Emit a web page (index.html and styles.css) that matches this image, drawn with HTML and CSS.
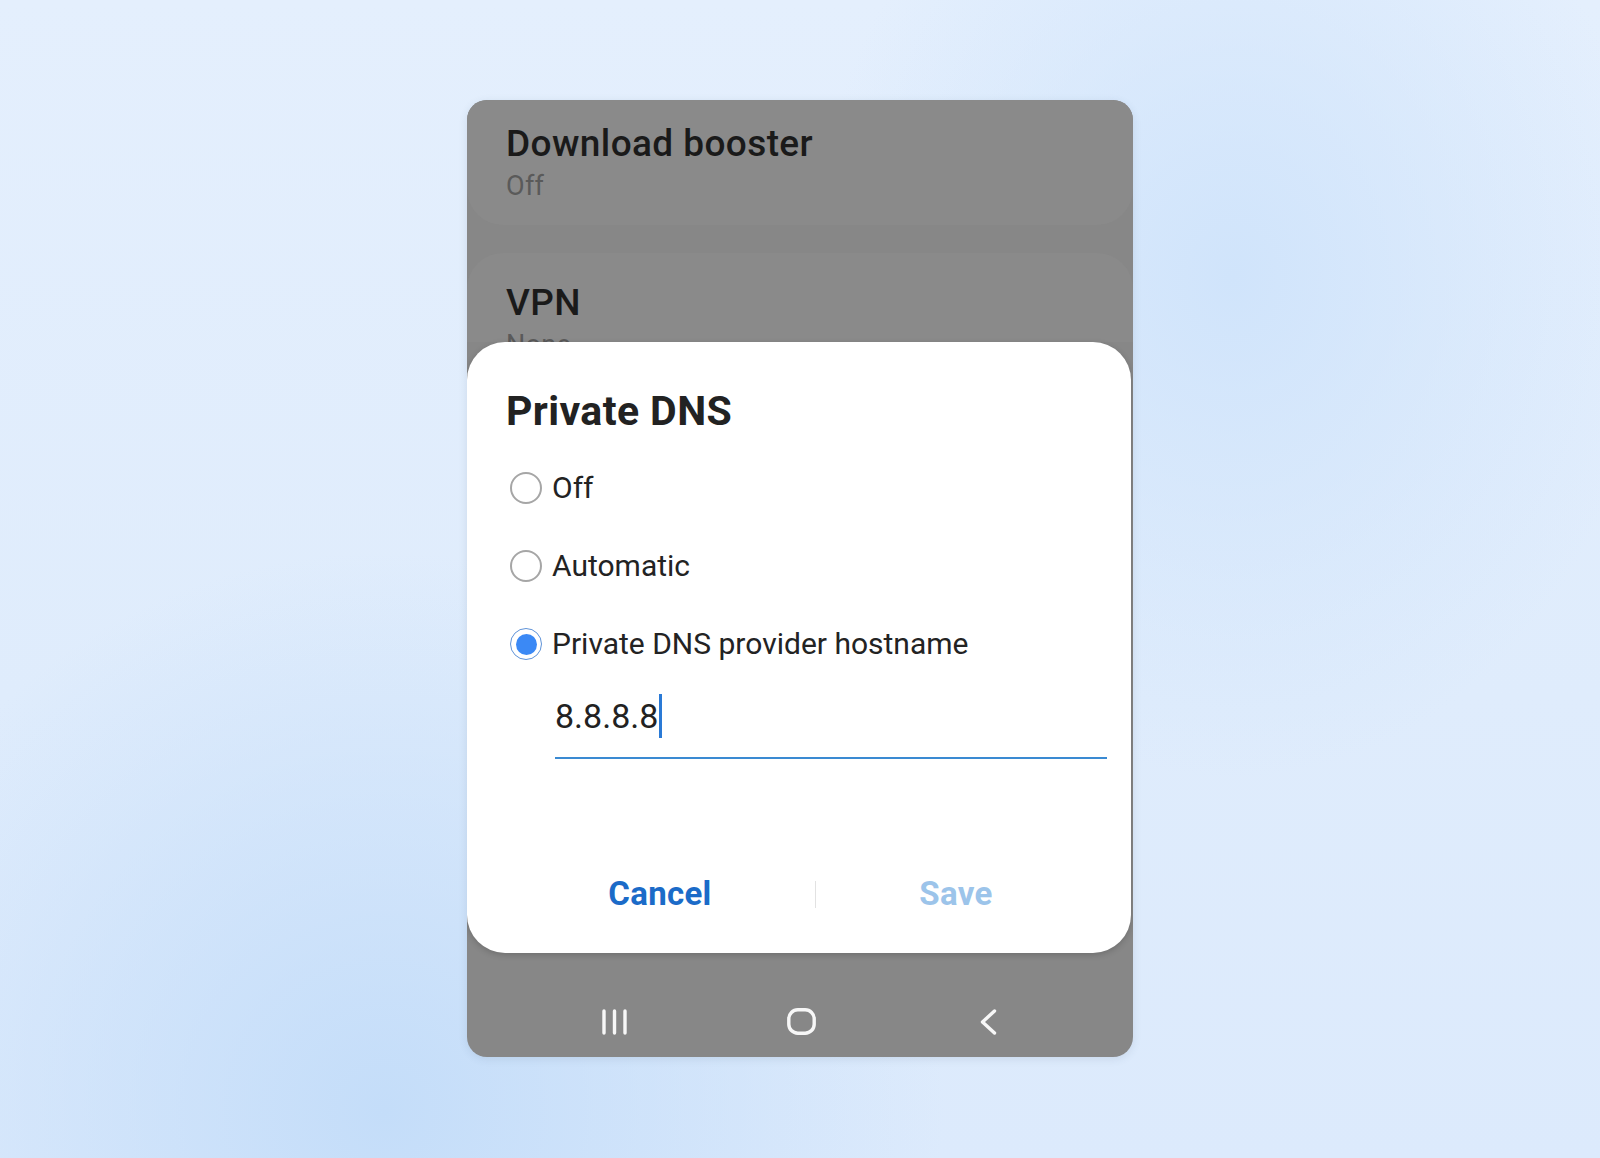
FILE: index.html
```html
<!DOCTYPE html>
<html lang="en">
<head>
<meta charset="utf-8">
<title>Private DNS</title>
<link rel="stylesheet" href="styles.css">
</head>
<body>
<div class="stage">
  <div class="phone">
    <div class="settings">
      <div class="card card-first">
        <div class="card-title">Download booster</div>
        <div class="card-sub">Off</div>
      </div>
      <div class="card card-second">
        <div class="card-title">VPN</div>
        <div class="card-sub">None</div>
      </div>
    </div>
    <div class="dialog">
      <div class="dialog-title">Private DNS</div>
      <div class="options">
        <div class="option"><span class="radio"></span><span class="opt-label">Off</span></div>
        <div class="option"><span class="radio"></span><span class="opt-label">Automatic</span></div>
        <div class="option"><span class="radio radio-on"><span class="radio-dot"></span></span><span class="opt-label">Private DNS provider hostname</span></div>
      </div>
      <div class="field"><span class="field-text">8.8.8.8</span><span class="caret"></span></div>
      <div class="actions">
        <div class="btn btn-cancel">Cancel</div>
        <div class="sep"></div>
        <div class="btn btn-save">Save</div>
      </div>
    </div>
    <div class="nav">
      <svg class="nav-icon" width="26" height="26" viewBox="0 0 26 26"><path d="M2 2V24M12.5 2V24M23 2V24" fill="none" stroke="#f7f7f7" stroke-width="3.4" stroke-linecap="round"/></svg>
      <svg class="nav-icon" width="29" height="27" viewBox="0 0 29 27"><rect x="1.8" y="1.8" width="25.4" height="23.4" rx="9" fill="none" stroke="#f7f7f7" stroke-width="3.4"/></svg>
      <svg class="nav-icon" width="17" height="26" viewBox="0 0 17 26"><path d="M14.5 2 L2.5 13 L14.5 24" fill="none" stroke="#f7f7f7" stroke-width="3.4" stroke-linecap="round" stroke-linejoin="round"/></svg>
    </div>
  </div>
</div>
</body>
</html>
```

FILE: styles.css
```css
html, body {
  margin: 0;
  padding: 0;
}

body {
  width: 1600px;
  height: 1158px;
  overflow: hidden;
  font-family: Roboto, "Liberation Sans", sans-serif;
  background:
    radial-gradient(ellipse 560px 560px at 24% 96%, rgba(196, 221, 249, 1) 0%, rgba(196, 221, 249, 0) 100%),
    radial-gradient(ellipse 420px 500px at 77% 24%, rgba(208, 228, 251, 1) 0%, rgba(208, 228, 251, 0) 100%),
    linear-gradient(180deg, #e4effd 0%, #dfecfc 60%, #dceafc 100%);
}

.stage {
  padding-top: 100px;
}

.phone {
  width: 666px;
  height: 957px;
  margin: 0 auto;
  border-radius: 20px;
  overflow: hidden;
  background: #878787;
  display: flex;
  flex-direction: column;
  box-shadow: 0 2px 8px rgba(60, 80, 110, 0.12);
}

.settings {
  flex: none;
  height: 242px;
  overflow: hidden;
}

.card {
  background: #8a8a8a;
  box-sizing: border-box;
  padding-left: 39px;
}

.card-first {
  height: 125px;
  padding-top: 23px;
  border-radius: 0 0 36px 36px;
}

.card-second {
  margin-top: 28px;
  height: 220px;
  padding-top: 29px;
  border-radius: 36px 36px 0 0;
}

.card-title {
  font-weight: 500;
  font-size: 37px;
  line-height: 42px;
  letter-spacing: 0.4px;
  color: #1a1a1a;
}

.card-sub {
  margin-top: 6px;
  font-size: 27px;
  line-height: 30px;
  letter-spacing: 0.3px;
  color: #5a5a5a;
}

.dialog {
  flex: none;
  height: 611px;
  margin-right: 2px;
  box-sizing: border-box;
  padding-top: 45px;
  background: #ffffff;
  border-radius: 38px;
  box-shadow: 0 2px 6px rgba(0, 0, 0, 0.18);
  position: relative;
  z-index: 1;
}

.dialog-title {
  padding-left: 39px;
  font-weight: 700;
  font-size: 41px;
  line-height: 48px;
  letter-spacing: 0.4px;
  color: #222222;
}

.options {
  margin-top: 14px;
}

.option {
  height: 78px;
  display: flex;
  align-items: center;
  padding-left: 43px;
  gap: 10px;
}

.radio {
  width: 32px;
  height: 32px;
  box-sizing: border-box;
  border: 2px solid #a6a6a6;
  border-radius: 50%;
  display: flex;
  align-items: center;
  justify-content: center;
  flex: none;
}

.radio-on {
  border: 1.6px solid #5f93d8;
}

.radio-dot {
  width: 21px;
  height: 21px;
  border-radius: 50%;
  background: #3b89f5;
}

.opt-label {
  font-size: 30px;
  line-height: 34px;
  color: #232323;
}

.field {
  margin: 11px 24px 0 88px;
  font-size: 34px;
  line-height: 44px;
  height: 44px;
  padding-bottom: 19px;
  border-bottom: 2px solid #3a8ad2;
  color: #222222;
}

.caret {
  display: inline-block;
  width: 3px;
  height: 44px;
  margin-left: 1px;
  vertical-align: top;
  background: #2a7ad6;
}

.actions {
  margin-top: 115px;
  display: flex;
  align-items: center;
  padding: 0 35px 0 38px;
}

.btn {
  text-align: center;
  font-weight: 700;
  font-size: 33px;
  line-height: 40px;
  letter-spacing: 0.3px;
}

.btn-cancel {
  flex: 0 0 310px;
  color: #1b6bc8;
}

.btn-save {
  flex: 1 1 0;
  color: #9cc4ea;
}

.sep {
  flex: none;
  width: 1px;
  height: 27px;
  background: #e2e2e2;
}

.nav {
  flex: 1;
  display: grid;
  grid-template-columns: repeat(3, 187px);
  padding-left: 54px;
  padding-top: 55px;
  justify-items: center;
  align-items: center;
  align-content: start;
}

.nav-icon {
  display: block;
}
```
